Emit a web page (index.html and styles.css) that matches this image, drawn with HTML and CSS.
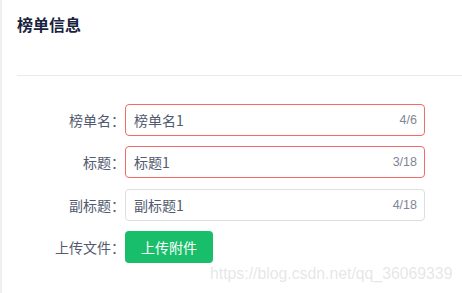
FILE: index.html
```html
<!DOCTYPE html>
<html lang="zh-CN">
<head>
<meta charset="utf-8">
<link rel="stylesheet" href="styles.css">
</head>
<body>
<div class="page">
  <div class="card">
    <div class="card-head">榜单信息</div>
    <div class="card-body">
      <div class="form-row">
        <label class="label">榜单名：</label>
        <div class="input error"><span class="value">榜单名1</span><span class="count">4/6</span></div>
      </div>
      <div class="form-row">
        <label class="label">标题：</label>
        <div class="input error"><span class="value">标题1</span><span class="count">3/18</span></div>
      </div>
      <div class="form-row">
        <label class="label">副标题：</label>
        <div class="input"><span class="value">副标题1</span><span class="count">4/18</span></div>
      </div>
      <div class="form-row">
        <label class="label">上传文件：</label>
        <button class="btn-upload">上传附件</button>
      </div>
    </div>
    <div class="watermark">https://blog.csdn.net/qq_36069339</div>
  </div>
</div>
</body>
</html>
```
FILE: styles.css
```css
html, body {
  margin: 0;
  padding: 0;
  background: #ffffff;
}
.page {
  width: 462px;
  height: 293px;
  border-left: 2px solid #f0f0f0;
  box-sizing: border-box;
  font-family: "Microsoft YaHei", "Noto Sans CJK SC", "Liberation Sans", sans-serif;
  overflow: hidden;
}
.card {
  position: relative;
  height: 100%;
  padding-left: 15px;
}
.card-head {
  height: 63px;
  padding-top: 12px;
  font-size: 16px;
  line-height: 24px;
  font-weight: bold;
  color: #17233d;
  border-bottom: 1px solid #e8eaec;
  box-sizing: content-box;
  margin-bottom: 28px;
}
.card-body {
  display: flex;
  flex-direction: column;
  gap: 10.4px;
}
.form-row {
  display: flex;
  align-items: center;
  height: 32px;
}
.label {
  width: 108px;
  text-align: right;
  font-size: 14px;
  color: #515a6e;
  line-height: 32px;
}
.input {
  width: 300px;
  height: 32px;
  box-sizing: border-box;
  border: 1px solid #dcdee2;
  border-radius: 4px;
  display: flex;
  align-items: center;
  justify-content: space-between;
  padding: 0 7px 0 8px;
}
.input.error {
  border-color: #f26b6b;
}
.value {
  font-size: 14px;
  color: #515a6e;
}
.count {
  font-size: 12.5px;
  color: #808695;
  font-family: "Liberation Sans", Arial, sans-serif;
}
.btn-upload {
  width: 88px;
  height: 32px;
  border: none;
  border-radius: 4px;
  background: #19be6b;
  color: #ffffff;
  font-size: 14px;
  font-family: "Microsoft YaHei", "Noto Sans CJK SC", sans-serif;
  padding: 0;
}
.watermark {
  position: absolute;
  left: 208px;
  top: 265px;
  font-family: "Liberation Sans", Arial, sans-serif;
  font-size: 15.8px;
  color: rgba(200, 200, 200, 0.45);
  white-space: nowrap;
}
```
